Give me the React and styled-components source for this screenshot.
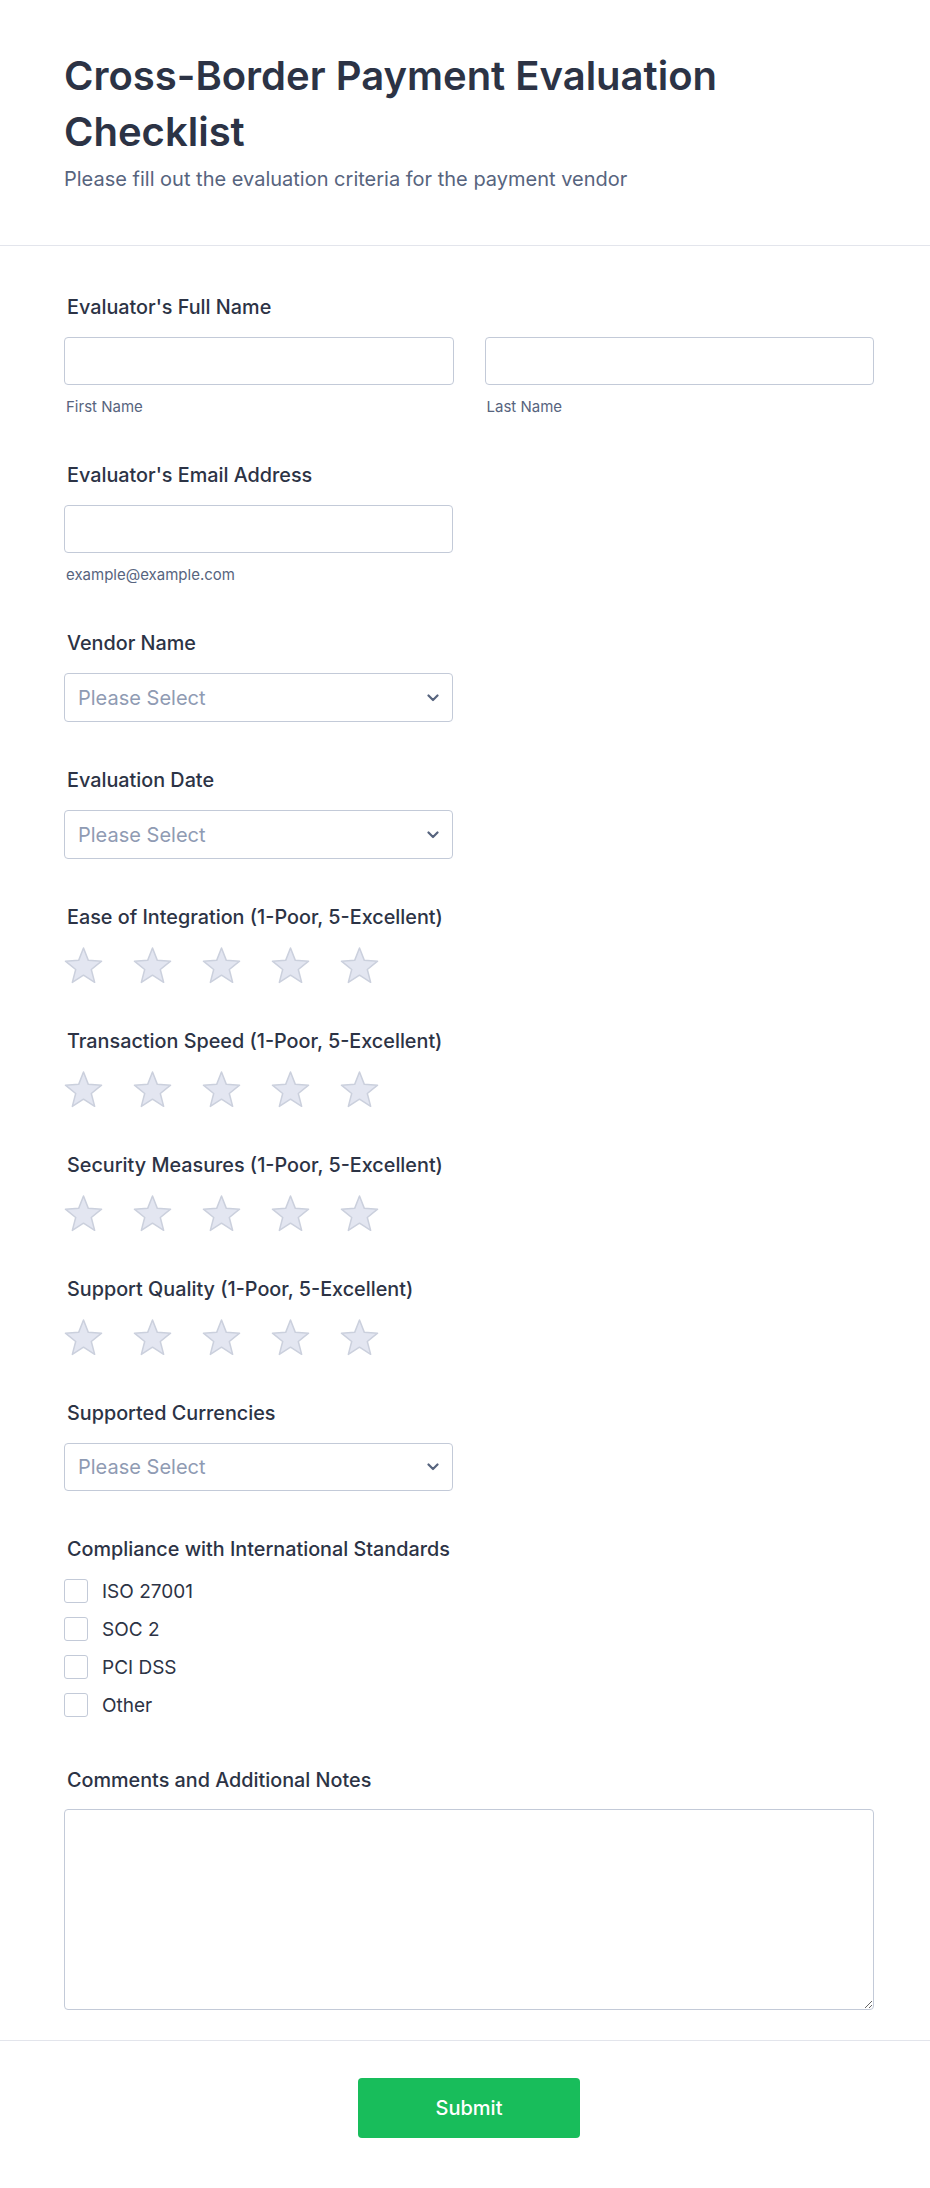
import React from 'react'
import styled, { createGlobalStyle } from 'styled-components'

const GlobalStyle = createGlobalStyle`
  * { box-sizing: border-box; }
  body {
    margin: 0;
    background: #ffffff;
    font-family: Inter, "Noto Sans", sans-serif;
    color: #2c3345;
  }
`

const Page = styled.div`
  width: 930px;
  background: #fff;
`

const Header = styled.header`
  padding: 48px 56px 52px 64px;
  border-bottom: 1px solid #e3e5ec;
`

const Title = styled.h1`
  margin: 0;
  max-width: 760px;
  font-size: 40px;
  line-height: 56px;
  font-weight: 600;
  color: #2c3345;
`

const Subtitle = styled.p`
  margin: 6px 0 0;
  font-size: 20px;
  line-height: 27px;
  color: #57647e;
`

const Body = styled.div`
  display: flex;
  flex-direction: column;
  gap: 44px;
  padding: 47px 56px 30px 64px;
`

const Field = styled.div`
  display: flex;
  flex-direction: column;
  padding-bottom: ${p => p.$extra || 0}px;
`

const Label = styled.label`
  font-size: 19.8px;
  line-height: 28px;
  font-weight: 500;
  color: #2c3345;
  padding-left: 3px;
  margin-bottom: ${p => p.$mb || 16}px;
`

const Row = styled.div`
  display: grid;
  grid-template-columns: 1fr 1fr;
  column-gap: 31px;
`

const Half = styled.div`
  display: flex;
  flex-direction: column;
  width: ${p => (p.$fixed ? '389px' : 'auto')};
`

const Input = styled.input`
  height: 48px;
  width: 100%;
  border: 1px solid #c3cad8;
  border-radius: 4px;
  background: #fff;
  padding: 0 14px;
  font: inherit;
  font-size: 18px;
  outline: none;
`

const SubLabel = styled.span`
  margin-top: 12px;
  font-size: 15px;
  line-height: 20px;
  color: #57647e;
  padding-left: 2px;
`

const SelectBox = styled.div`
  width: 389px;
  height: ${p => p.$h || 49}px;
  border: 1px solid #c3cad8;
  border-radius: 4px;
  display: flex;
  align-items: center;
  justify-content: space-between;
  padding: 0 13px;
  background: #fff;
`

const Placeholder = styled.span`
  font-size: 20px;
  font-weight: 400;
  color: #8f9bb3;
`

const Stars = styled.div`
  display: flex;
  gap: 30px;
  height: 36px;
`

const CheckList = styled.div`
  display: flex;
  flex-direction: column;
  gap: 14px;
`

const CheckRow = styled.label`
  display: flex;
  align-items: center;
  gap: 14px;
  height: 24px;
  font-size: 19px;
  color: #2c3345;
`

const Box = styled.span`
  width: 24px;
  height: 24px;
  border: 1px solid #c3cad8;
  border-radius: 3px;
  background: #fff;
  flex-shrink: 0;
`

const TextArea = styled.textarea`
  width: 100%;
  height: 201px;
  border: 1px solid #c3cad8;
  border-radius: 4px;
  resize: vertical;
  font: inherit;
  outline: none;
  display: block;
`

const Footer = styled.footer`
  border-top: 1px solid #e3e5ec;
  padding: 37px 56px 50px 64px;
  display: flex;
  justify-content: center;
`

const SubmitButton = styled.button`
  width: 222px;
  height: 60px;
  border: none;
  border-radius: 4px;
  background: #18bd5b;
  color: #fff;
  font-family: Inter, sans-serif;
  font-size: 20px;
  font-weight: 500;
  cursor: pointer;
`

function starPoints(cx, cy, R, r) {
  const pts = []
  for (let i = 0; i < 10; i++) {
    const rad = i % 2 === 0 ? R : r
    const a = (-90 + i * 36) * Math.PI / 180
    pts.push(`${(cx + rad * Math.cos(a)).toFixed(2)},${(cy + rad * Math.sin(a)).toFixed(2)}`)
  }
  return pts.join(' ')
}

const STAR = starPoints(19.5, 20, 19, 8.2)

const Star = () => (
  <svg width="39" height="37" viewBox="0 0 39 37">
    <polygon points={STAR} fill="#e3e6f1" stroke="#cbd0dd" strokeWidth="1.5" strokeLinejoin="round" />
  </svg>
)

const Chevron = () => (
  <svg width="12" height="8" viewBox="0 0 12 8">
    <path d="M1.5 1.5 L6 6 L10.5 1.5" fill="none" stroke="#57647e" strokeWidth="2.2" strokeLinecap="round" strokeLinejoin="round" />
  </svg>
)

const Select = ({ h }) => (
  <SelectBox $h={h}>
    <Placeholder>Please Select</Placeholder>
    <Chevron />
  </SelectBox>
)

const Rating = ({ label }) => (
  <Field>
    <Label>{label}</Label>
    <Stars>
      {[1, 2, 3, 4, 5].map(n => <Star key={n} />)}
    </Stars>
  </Field>
)

const standards = ['ISO 27001', 'SOC 2', 'PCI DSS', 'Other']

const App = () => {
  return (
    <Page>
      <GlobalStyle />
      <Header>
        <Title>Cross-Border Payment Evaluation Checklist</Title>
        <Subtitle>Please fill out the evaluation criteria for the payment vendor</Subtitle>
      </Header>
      <Body>
        <Field>
          <Label>Evaluator's Full Name</Label>
          <Row>
            <Half>
              <Input />
              <SubLabel>First Name</SubLabel>
            </Half>
            <Half>
              <Input />
              <SubLabel>Last Name</SubLabel>
            </Half>
          </Row>
        </Field>
        <Field>
          <Label>Evaluator's Email Address</Label>
          <Half $fixed>
            <Input type="email" />
            <SubLabel>example@example.com</SubLabel>
          </Half>
        </Field>
        <Field>
          <Label>Vendor Name</Label>
          <Select />
        </Field>
        <Field>
          <Label>Evaluation Date</Label>
          <Select />
        </Field>
        <Rating label="Ease of Integration (1-Poor, 5-Excellent)" />
        <Rating label="Transaction Speed (1-Poor, 5-Excellent)" />
        <Rating label="Security Measures (1-Poor, 5-Excellent)" />
        <Rating label="Support Quality (1-Poor, 5-Excellent)" />
        <Field>
          <Label>Supported Currencies</Label>
          <Select h={48} />
        </Field>
        <Field $extra={5}>
          <Label>Compliance with International Standards</Label>
          <CheckList>
            {standards.map(s => (
              <CheckRow key={s}>
                <Box />
                {s}
              </CheckRow>
            ))}
          </CheckList>
        </Field>
        <Field>
          <Label $mb={15}>Comments and Additional Notes</Label>
          <TextArea />
        </Field>
      </Body>
      <Footer>
        <SubmitButton>Submit</SubmitButton>
      </Footer>
    </Page>
  )
}

export default App
